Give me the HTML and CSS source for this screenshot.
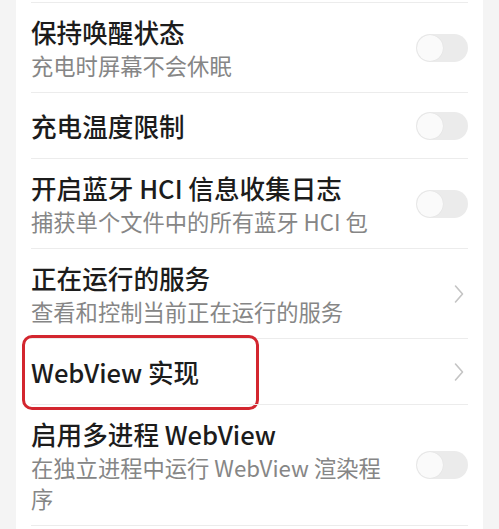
FILE: index.html
```html
<!DOCTYPE html>
<html lang="zh-CN">
<head>
    <meta charset="UTF-8">
    <meta name="viewport" content="width=device-width, initial-scale=1.0">
    <title>开发者选项</title>

    <link rel="stylesheet" href="styles.css">
</head>
<body>
    <div class="page">
        <div class="card">
            <div class="row">
                <div class="text">
                    <div class="title">保持唤醒状态</div>
                    <div class="sub">充电时屏幕不会休眠</div>
                </div>
                <div class="switch"><span class="knob"></span></div>
            </div>
            <div class="row single">
                <div class="text">
                    <div class="title">充电温度限制</div>
                </div>
                <div class="switch"><span class="knob"></span></div>
            </div>
            <div class="row">
                <div class="text">
                    <div class="title">开启蓝牙 HCI 信息收集日志</div>
                    <div class="sub">捕获单个文件中的所有蓝牙 HCI 包</div>
                </div>
                <div class="switch"><span class="knob"></span></div>
            </div>
            <div class="row">
                <div class="text">
                    <div class="title">正在运行的服务</div>
                    <div class="sub">查看和控制当前正在运行的服务</div>
                </div>
                <svg class="chevron" viewBox="0 0 10 20" width="10" height="20">
                    <path d="M1.5 2 L8.5 10 L1.5 18" fill="none" stroke="#c4c4c4" stroke-width="1.6" stroke-linecap="round" stroke-linejoin="round"/>
                </svg>
            </div>
            <div class="row single marked">
                <div class="text">
                    <div class="title">WebView 实现</div>
                </div>
                <svg class="chevron" viewBox="0 0 10 20" width="10" height="20">
                    <path d="M1.5 2 L8.5 10 L1.5 18" fill="none" stroke="#c4c4c4" stroke-width="1.6" stroke-linecap="round" stroke-linejoin="round"/>
                </svg>
                <div class="highlight"></div>
            </div>
            <div class="row">
                <div class="text">
                    <div class="title">启用多进程 WebView</div>
                    <div class="sub">在独立进程中运行 WebView 渲染程序</div>
                </div>
                <div class="switch"><span class="knob"></span></div>
            </div>
        </div>
    </div>
</body>
</html>
```

FILE: styles.css
```css
* {
    box-sizing: border-box;
}
body {
    margin: 0;
    background-color: #f4f4f4;
    font-family: "Noto Sans CJK SC", "Noto Sans", sans-serif;
}
.page {
    padding: 0 16px;
}
.card {
    background-color: #ffffff;
    padding: 2px 15px 0;
    min-height: 529px;
}
.row {
    display: flex;
    align-items: center;
    gap: 20px;
    padding: 11px 0 11px;
    border-top: 1px solid #ececec;
    position: relative;
}
.row:last-child {
    border-bottom: 1px solid #ececec;
}
.row.single {
    padding: 15px 0 14px;
}
.text {
    flex: 1;
    min-width: 0;
}
.title {
    font-size: 25.6px;
    line-height: 36px;
    font-weight: 500;
    color: #1c1c1c;
}
.sub {
    font-size: 22.3px;
    line-height: 31px;
    color: #868686;
}
.switch {
    width: 52px;
    height: 28px;
    border-radius: 14px;
    background-color: #ebebeb;
    padding: 1px;
    flex-shrink: 0;
}
.knob {
    display: block;
    width: 26px;
    height: 26px;
    border-radius: 50%;
    background-color: #fafafa;
    box-shadow: 0 0 1px rgba(0, 0, 0, 0.12);
}
.chevron {
    flex-shrink: 0;
    margin-right: 4px;
}
.highlight {
    position: absolute;
    left: -9px;
    top: -4px;
    width: 237px;
    height: 75px;
    border: 3px solid #d3262f;
    border-radius: 10px;
}
```
